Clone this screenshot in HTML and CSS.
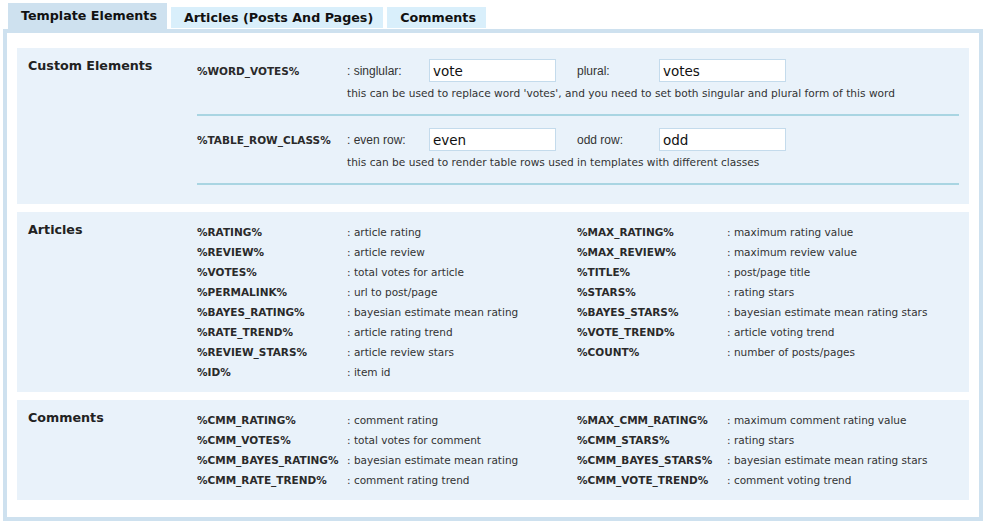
FILE: index.html
```html
<!DOCTYPE html>
<html>
<head>
<meta charset="utf-8">
<link rel="stylesheet" href="styles.css">
</head>
<body>
<div class="page">
  <ul class="tabs">
    <li class="tab tab-active">Template Elements</li>
    <li class="tab">Articles (Posts And Pages)</li>
    <li class="tab">Comments</li>
  </ul>
  <div class="frame">
    <div class="section">
      <div class="title">Custom Elements</div>
      <div class="content">
        <div class="cust-item">
          <div class="cust-row">
            <span class="code">%WORD_VOTES%</span>
            <span class="label">: singlular:</span>
            <input class="field" type="text" value="vote">
            <span class="label label-second">plural:</span>
            <input class="field" type="text" value="votes">
          </div>
          <div class="hint">this can be used to replace word 'votes', and you need to set both singular and plural form of this word</div>
        </div>
        <div class="cust-item cust-last">
          <div class="cust-row">
            <span class="code">%TABLE_ROW_CLASS%</span>
            <span class="label">: even row:</span>
            <input class="field" type="text" value="even">
            <span class="label label-second">odd row:</span>
            <input class="field" type="text" value="odd">
          </div>
          <div class="hint">this can be used to render table rows used in templates with different classes</div>
        </div>
      </div>
    </div>

    <div class="section">
      <div class="title">Articles</div>
      <div class="grid">
        <span class="code">%RATING%</span><span class="desc">: article rating</span>
        <span class="code">%MAX_RATING%</span><span class="desc">: maximum rating value</span>
        <span class="code">%REVIEW%</span><span class="desc">: article review</span>
        <span class="code">%MAX_REVIEW%</span><span class="desc">: maximum review value</span>
        <span class="code">%VOTES%</span><span class="desc">: total votes for article</span>
        <span class="code">%TITLE%</span><span class="desc">: post/page title</span>
        <span class="code">%PERMALINK%</span><span class="desc">: url to post/page</span>
        <span class="code">%STARS%</span><span class="desc">: rating stars</span>
        <span class="code">%BAYES_RATING%</span><span class="desc">: bayesian estimate mean rating</span>
        <span class="code">%BAYES_STARS%</span><span class="desc">: bayesian estimate mean rating stars</span>
        <span class="code">%RATE_TREND%</span><span class="desc">: article rating trend</span>
        <span class="code">%VOTE_TREND%</span><span class="desc">: article voting trend</span>
        <span class="code">%REVIEW_STARS%</span><span class="desc">: article review stars</span>
        <span class="code">%COUNT%</span><span class="desc">: number of posts/pages</span>
        <span class="code">%ID%</span><span class="desc">: item id</span>
      </div>
    </div>

    <div class="section">
      <div class="title">Comments</div>
      <div class="grid">
        <span class="code">%CMM_RATING%</span><span class="desc">: comment rating</span>
        <span class="code">%MAX_CMM_RATING%</span><span class="desc">: maximum comment rating value</span>
        <span class="code">%CMM_VOTES%</span><span class="desc">: total votes for comment</span>
        <span class="code">%CMM_STARS%</span><span class="desc">: rating stars</span>
        <span class="code">%CMM_BAYES_RATING%</span><span class="desc">: bayesian estimate mean rating</span>
        <span class="code">%CMM_BAYES_STARS%</span><span class="desc">: bayesian estimate mean rating stars</span>
        <span class="code">%CMM_RATE_TREND%</span><span class="desc">: comment rating trend</span>
        <span class="code">%CMM_VOTE_TREND%</span><span class="desc">: comment voting trend</span>
      </div>
    </div>
  </div>
</div>
</body>
</html>
```

FILE: styles.css
```css
html, body {
  margin: 0;
  padding: 0;
  background: #ffffff;
}

body {
  font-family: "DejaVu Sans", Verdana, sans-serif;
  color: #222222;
}

.page {
  padding: 3px 3px 0 3px;
}

.tabs {
  list-style: none;
  margin: 0 0 0 5px;
  padding: 0;
  display: flex;
  align-items: flex-end;
  gap: 4px;
  height: 26px;
}

.tab {
  height: 21px;
  margin-bottom: 1px;
  padding: 0 10px 0 13px;
  background: #d9effb;
  font-size: 12.7px;
  font-weight: bold;
  line-height: 22px;
  color: #111111;
  box-sizing: border-box;
}

.tab-active {
  height: 26px;
  margin-bottom: 0;
  padding: 0 10px 0 13px;
  background: #cee1ef;
  line-height: 26px;
}

.frame {
  border: 4px solid #cee1ef;
  padding: 15px 10px 17px;
  display: flex;
  flex-direction: column;
  gap: 8px;
}

.section {
  background: #e9f2fa;
  padding: 10px 10px 10px 11px;
  display: grid;
  grid-template-columns: 169px 1fr;
}

.title {
  font-size: 12.7px;
  font-weight: bold;
  line-height: 16px;
  color: #222222;
}

.code {
  font-size: 10.5px;
  font-weight: bold;
  color: #2a2a2a;
  white-space: nowrap;
}

.desc {
  font-size: 10.5px;
  color: #333333;
  white-space: nowrap;
}

.grid {
  display: grid;
  grid-template-columns: 150px 230px 150px 1fr;
  grid-auto-rows: 20px;
  align-items: center;
}

.cust-item {
  padding: 11px 0 14px;
  border-bottom: 2px solid #a9d5e2;
}

.cust-item:first-child {
  padding-top: 0;
}

.cust-last {
  margin-bottom: 9px;
}

.cust-row {
  display: flex;
  align-items: center;
  height: 25px;
}

.cust-row .code {
  width: 150px;
}

.label {
  width: 82px;
  font-family: "Liberation Sans", Arial, sans-serif;
  font-size: 12px;
  color: #333333;
}

.label-second {
  margin-left: 21px;
}

.field {
  width: 127px;
  height: 23px;
  box-sizing: border-box;
  margin: 0;
  border: 1px solid #c4dbec;
  background: #ffffff;
  padding: 0 3px;
  font-family: "DejaVu Sans", Verdana, sans-serif;
  font-size: 13.5px;
  color: #111111;
  outline: none;
}

.hint {
  margin-top: 4px;
  margin-left: 150px;
  font-size: 10.6px;
  line-height: 13px;
  color: #333333;
}
```
